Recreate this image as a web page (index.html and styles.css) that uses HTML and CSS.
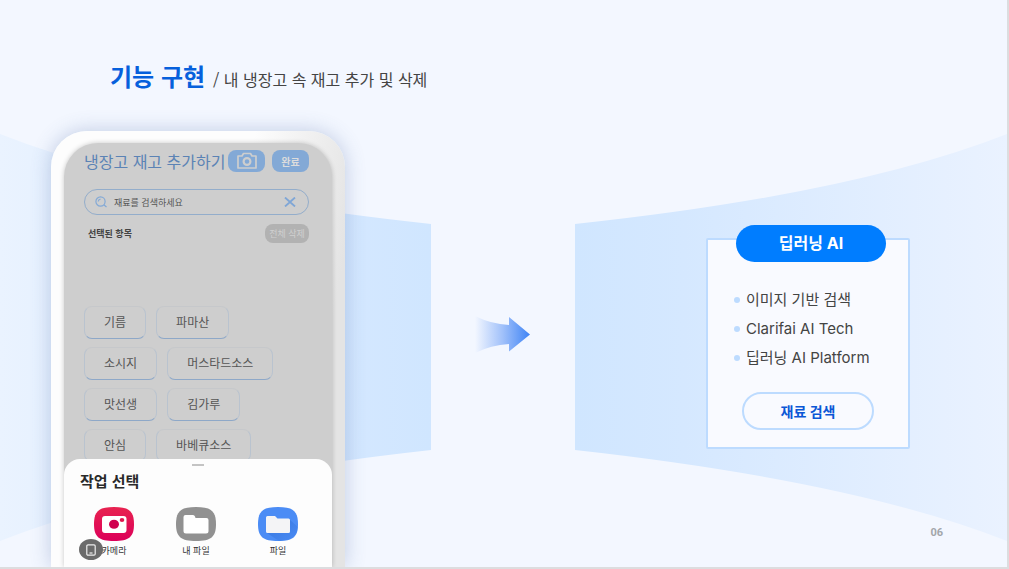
FILE: index.html
```html
<!DOCTYPE html>
<html lang="ko">
<head>
<meta charset="utf-8">
<meta name="viewport" content="width=device-width, initial-scale=1">
<title>기능 구현</title>
<link rel="stylesheet" href="styles.css">
</head>
<body>
<section class="slide">
  <svg class="backdrop" viewBox="0 0 1007 567" preserveAspectRatio="none" aria-hidden="true">
    <defs>
      <linearGradient id="wingLeft"><stop offset="0" stop-color="#eaf3ff"/><stop offset="0.75" stop-color="#d5e8ff"/><stop offset="1" stop-color="#d0e6ff"/></linearGradient>
      <linearGradient id="wingRight"><stop offset="0" stop-color="#d0e6ff"/><stop offset="0.25" stop-color="#d5e8ff"/><stop offset="1" stop-color="#eaf2ff"/></linearGradient>
    </defs>
    <path d="M0 134Q152 194 431 224V450Q152 481 0 541Z" fill="url(#wingLeft)"/>
    <path d="M1007 134Q855 194 575 224V450Q855 481 1007 541Z" fill="url(#wingRight)"/>
  </svg>

  <header class="heading">
    <h1 class="heading-title">기능 구현</h1>
    <p class="heading-sub">/ 내 냉장고 속 재고 추가 및 삭제</p>
  </header>

  <main class="stage">
    <div class="phone">
      <div class="screen">
        <div class="app">
          <div class="app-bar">
            <h2 class="app-title">냉장고 재고 추가하기</h2>
            <button class="chip-button" type="button" aria-label="카메라">
              <svg width="22" height="18" viewBox="0 0 22 18" fill="none" stroke="#cecece" stroke-width="1.700" stroke-linejoin="round"><path d="M2 4H6L7.500 1.500H14.500L16 4H20V16H2Z"/><circle cx="11" cy="9.500" r="3.400" stroke-width="2.200"/></svg>
            </button>
            <button class="chip-button" type="button">완료</button>
          </div>
          <div class="search">
            <svg width="12" height="12" viewBox="0 0 12 12" fill="none" stroke="#83a9d6" stroke-width="1.200"><circle cx="5.500" cy="5.500" r="4.600"/><path d="M8.800 8.800L11.500 11M3.200 5.500Q3.400 3.500 5.500 3.200"/></svg>
            <input class="search-input" type="text" placeholder="재료를 검색하세요" aria-label="재료 검색어">
            <button class="search-clear" type="button" aria-label="지우기">
              <svg width="12" height="10" viewBox="0 0 12 10" stroke="#7fa6d6" stroke-width="1.800"><path d="M1 0.500L11 9.500M11 0.500L1 9.500"/></svg>
            </button>
          </div>
          <div class="selected">
            <h3 class="selected-title">선택된 항목</h3>
            <button class="clear-all" type="button">전체 삭제</button>
          </div>
          <div class="tags">
            <div class="tag-row"><button class="tag" type="button">기름</button><button class="tag" type="button">파마산</button></div>
            <div class="tag-row"><button class="tag" type="button">소시지</button><button class="tag" type="button">머스타드소스</button></div>
            <div class="tag-row"><button class="tag" type="button">맛선생</button><button class="tag" type="button">김가루</button></div>
            <div class="tag-row"><button class="tag" type="button">안심</button><button class="tag" type="button">바베큐소스</button></div>
          </div>
        </div>
        <div class="sheet">
          <span class="sheet-handle"></span>
          <h2 class="sheet-title">작업 선택</h2>
          <div class="sheet-options">
            <button class="option" type="button">
              <svg width="40" height="34" viewBox="0 0 40 34"><defs><linearGradient id="camera" x2="0" y2="1"><stop stop-color="#e82350"/><stop offset="1" stop-color="#dc005a"/></linearGradient></defs><path d="M20 0C35 0 40 4 40 17S35 34 20 34S0 30 0 17S5 0 20 0Z" fill="url(#camera)"/><rect x="8" y="9" width="24.500" height="17" rx="3" fill="#fff"/><ellipse cx="20" cy="17.300" rx="5" ry="4.500" fill="#d0004f"/><ellipse cx="28" cy="13" rx="2.300" ry="1.900" fill="#e0174f"/></svg>
              카메라
            </button>
            <button class="option" type="button">
              <svg width="40" height="34" viewBox="0 0 40 34"><path d="M20 0C35 0 40 4 40 17S35 34 20 34S0 30 0 17S5 0 20 0Z" fill="#919191"/><path d="M7.500 10Q7.500 8 9.500 8H17Q18.500 8 19 9.500L19.500 11H30.500Q32.500 11 32.500 13V24Q32.500 26.500 30 26.500H10Q7.500 26.500 7.500 24Z" fill="#fff"/></svg>
              내 파일
            </button>
            <button class="option" type="button">
              <svg width="40" height="34" viewBox="0 0 40 34"><defs><linearGradient id="fold" x2="1" y2="1"><stop offset="0.300" stop-color="#2968d0"/><stop offset="1" stop-color="#4889f3"/></linearGradient></defs><path d="M20 0C35 0 40 4 40 17S35 34 20 34S0 30 0 17S5 0 20 0Z" fill="#4b8cf5"/><path d="M31 12L39.800 20Q39 33.500 21 34L9 26Z" fill="url(#fold)" opacity="0.450"/><path d="M8 10.500Q8 9 9.500 9H17L19.500 11.500H30.500Q32 11.500 32 13V24.500Q32 26 30.500 26H9.500Q8 26 8 24.500Z" fill="#f4f4f6"/></svg>
              파일
            </button>
          </div>
          <span class="device-badge">
            <svg width="10" height="12" viewBox="0 0 10 12" fill="none" stroke="#eee" stroke-width="1.200"><rect x="0.800" y="0.800" width="8.400" height="10.400" rx="1.200"/><path d="M3.500 9H6.500"/></svg>
          </span>
        </div>
      </div>
    </div>

    <div class="flow">
      <svg width="56" height="38" viewBox="0 0 56 38" aria-hidden="true"><defs><linearGradient id="arrow"><stop offset="0" stop-color="#f3f7ff"/><stop offset="0.500" stop-color="#a1c1fa"/><stop offset="1" stop-color="#3f84f5"/></linearGradient></defs><path d="M0 0Q16 8 34 9V1L55 18.500L34 35.500V28Q16 29 0 37Z" fill="url(#arrow)"/></svg>
    </div>

    <article class="card">
      <h2 class="card-title">딥러닝 AI</h2>
      <ul class="card-list">
        <li class="card-item">이미지 기반 검색</li>
        <li class="card-item">Clarifai AI Tech</li>
        <li class="card-item">딥러닝 AI Platform</li>
      </ul>
      <button class="card-button" type="button">재료 검색</button>
    </article>
  </main>
  <span class="page-number">06</span>
</section>
</body>
</html>
```
FILE: styles.css
```css
* { box-sizing: border-box; }

body {
  margin: 0;
  padding: 0 2px 2px 0;
  background: #dcdddf;
  font-family: Inter, "Noto Sans CJK KR", sans-serif;
  color: #444;
}

h1, h2, h3, p, ul { margin: 0; padding: 0; }

button {
  border: 0;
  padding: 0;
  background: none;
  font: inherit;
  color: inherit;
}

svg { display: block; flex: none; }

.slide {
  position: relative;
  display: flex;
  flex-direction: column;
  height: calc(100vh - 2px);
  background: #f3f7ff;
  overflow: hidden;
}

.backdrop {
  position: absolute;
  inset: 0;
  width: 100%;
  height: 100%;
}

.heading {
  position: relative;
  display: flex;
  align-items: baseline;
  gap: 8px;
  padding: 58px 110px 0;
  height: 131px;
  font-family: "Noto Sans CJK KR", sans-serif;
  line-height: 36px;
}

.heading-title { font-size: 24px; color: #0660dc; }
.heading-sub { font-size: 16px; }

.stage {
  position: relative;
  flex: 1;
  display: flex;
  min-height: 0;
  padding: 0 97px 0 51px;
}

.phone {
  flex: none;
  width: 294px;
  padding: 12px 13px 0;
  border-radius: 36px 36px 0 0;
  background: linear-gradient(100deg, #fdfdfd 55%, #e4e4e4 85%);
  box-shadow: 0 0 20px rgba(70, 100, 160, 0.3);
}

.screen {
  display: flex;
  flex-direction: column;
  height: 100%;
  border-radius: 34px 34px 0 0;
  background: #cecece;
  box-shadow: 0 0 5px rgba(0, 0, 0, 0.22);
  font-family: "Noto Sans CJK KR", sans-serif;
}

.app {
  flex: 1;
  min-height: 0;
  padding: 7px 23px 0 20px;
  overflow: hidden;
}

.app-bar {
  display: flex;
  align-items: center;
  gap: 7px;
  height: 22px;
}

.app-title {
  flex: 1;
  min-width: 0;
  font-size: 16px;
  font-weight: 400;
  line-height: 22px;
  white-space: nowrap;
  color: #5b83b5;
}

.chip-button {
  display: flex;
  flex: none;
  align-items: center;
  justify-content: center;
  width: 37px;
  height: 22px;
  border-radius: 8px;
  background: #83a9d6;
  font-size: 10px;
  font-weight: 700;
  color: #dcdcdc;
}

.search {
  display: flex;
  align-items: center;
  gap: 7px;
  height: 26px;
  margin-top: 17px;
  padding: 0 12px 0 10px;
  border: 1px solid #93adcb;
  border-radius: 13px;
}

.search-input {
  flex: 1;
  min-width: 0;
  padding: 0;
  border: 0;
  background: none;
  font: 9px "Noto Sans CJK KR", sans-serif;
}

.search-input::placeholder { color: #555; }

.selected {
  display: flex;
  align-items: center;
  justify-content: space-between;
  margin-top: 9px;
  padding-left: 4px;
}

.selected-title { font-size: 9px; color: #444; }

.clear-all {
  width: 44px;
  height: 19px;
  border-radius: 8px;
  background: #b2b2b2;
  font-size: 9px;
  line-height: 19px;
  color: #d0d0d0;
}

.tags {
  display: grid;
  gap: 8px;
  margin-top: 63px;
}

.tag-row { display: flex; gap: 10px; }

.tag {
  height: 33px;
  padding: 0 19px 3px;
  border: 1px solid #b9c3cf;
  border-top-color: #c6c8cb;
  border-bottom-color: #8ea8c8;
  border-radius: 8px;
  font-size: 12px;
  color: #555;
}

.sheet {
  position: relative;
  padding: 5px 9px 10px;
  border-radius: 16px 16px 0 0;
  background: #fdfdfd;
}

.sheet-handle {
  display: block;
  width: 12px;
  height: 2px;
  margin: 0 auto;
  background: #c4c4c4;
}

.sheet-title {
  margin: 5px 0 0 7px;
  font-size: 15px;
  line-height: 20px;
  color: #2a2a2a;
}

.sheet-options {
  display: grid;
  grid-template-columns: repeat(3, 1fr);
  margin: 16px 4px 0 0;
}

.option {
  display: flex;
  flex-direction: column;
  align-items: center;
  gap: 4px;
  font-size: 9px;
  line-height: 12px;
  color: #333;
}

.device-badge {
  position: absolute;
  left: 15px;
  bottom: 7px;
  display: flex;
  align-items: center;
  justify-content: center;
  width: 24px;
  height: 21px;
  border-radius: 50%;
  background: #6b6b6b;
}

.flow {
  flex: 1;
  display: flex;
  justify-content: center;
  align-items: flex-start;
  padding: 185px 45px 0 0;
}

.card {
  flex: none;
  align-self: flex-start;
  display: flex;
  flex-direction: column;
  align-items: center;
  width: 204px;
  margin-top: 107px;
  padding-bottom: 17px;
  border: 2px solid #bddbff;
  border-radius: 2px;
  background: #f9faff;
}

.card-title {
  align-self: flex-start;
  width: 150px;
  margin: -15px 0 0 28px;
  border-radius: 19px;
  background: #007dff;
  font-size: 16px;
  line-height: 37px;
  text-align: center;
  color: #fff;
}

.card-list {
  align-self: stretch;
  margin: 23px 0 20px;
  padding-left: 26px;
  list-style: none;
  font-size: 15px;
  line-height: 29px;
}

.card-item {
  display: flex;
  align-items: center;
  gap: 6px;
  white-space: nowrap;
}

.card-item::before {
  content: "";
  width: 6px;
  height: 6px;
  border-radius: 50%;
  background: #bddbff;
}

.card-button {
  width: 132px;
  height: 38px;
  border: 2px solid #bddbff;
  border-radius: 19px;
  font-size: 14px;
  font-weight: 700;
  color: #0b57d6;
}

.page-number {
  position: absolute;
  right: 64px;
  bottom: 28px;
  font: 700 11px/13px Roboto, sans-serif;
  color: #a2a6aa;
}
```
